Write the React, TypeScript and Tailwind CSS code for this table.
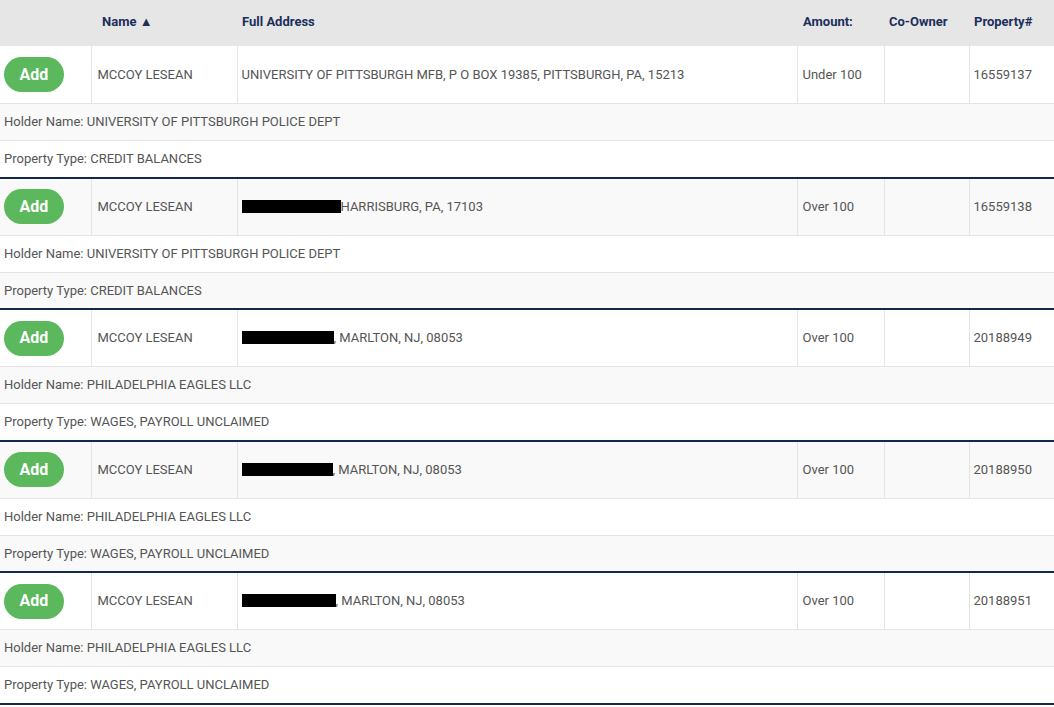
import React from "react";

interface Result {
  id: string;
  name: string;
  address: string;
  redactW?: number;
  amount: string;
  coOwner: string;
  holder: string;
  type: string;
}

const RESULTS: Result[] = [
  {
    id: "16559137",
    name: "MCCOY LESEAN",
    address: "UNIVERSITY OF PITTSBURGH MFB, P O BOX 19385, PITTSBURGH, PA, 15213",
    amount: "Under 100",
    coOwner: "",
    holder: "UNIVERSITY OF PITTSBURGH POLICE DEPT",
    type: "CREDIT BALANCES",
  },
  {
    id: "16559138",
    name: "MCCOY LESEAN",
    address: "HARRISBURG, PA, 17103",
    redactW: 99,
    amount: "Over 100",
    coOwner: "",
    holder: "UNIVERSITY OF PITTSBURGH POLICE DEPT",
    type: "CREDIT BALANCES",
  },
  {
    id: "20188949",
    name: "MCCOY LESEAN",
    address: ", MARLTON, NJ, 08053",
    redactW: 92,
    amount: "Over 100",
    coOwner: "",
    holder: "PHILADELPHIA EAGLES LLC",
    type: "WAGES, PAYROLL UNCLAIMED",
  },
  {
    id: "20188950",
    name: "MCCOY LESEAN",
    address: ", MARLTON, NJ, 08053",
    redactW: 91,
    amount: "Over 100",
    coOwner: "",
    holder: "PHILADELPHIA EAGLES LLC",
    type: "WAGES, PAYROLL UNCLAIMED",
  },
  {
    id: "20188951",
    name: "MCCOY LESEAN",
    address: ", MARLTON, NJ, 08053",
    redactW: 94,
    amount: "Over 100",
    coOwner: "",
    holder: "PHILADELPHIA EAGLES LLC",
    type: "WAGES, PAYROLL UNCLAIMED",
  },
];

// table rows are striped by position, so the stripe shifts from group to group
function stripe(i: number) {
  return i % 2 === 0 ? "bg-white" : "bg-[#f9f9f9]";
}

export default function App() {
  return (
    <div
      className="w-[1054px] h-[707px] overflow-hidden bg-white text-[13px] text-[#555]"
      style={{ fontFamily: "Roboto, 'Liberation Sans', sans-serif" }}
    >
      <table className="w-full table-fixed border-collapse">
        <colgroup>
          <col className="w-[91px]" />
          <col className="w-[146px]" />
          <col className="w-[560px]" />
          <col className="w-[87px]" />
          <col className="w-[85px]" />
          <col className="w-[85px]" />
        </colgroup>
        <thead>
          <tr className="h-[46px] bg-[#e6e6e6] text-[13px] font-bold text-[#1b2f5b]">
            <th className="text-left align-middle pb-[2px]"></th>
            <th className="text-left align-middle pb-[2px] pl-[11px]">Name ▲</th>
            <th className="text-left align-middle pb-[2px] pl-[5px]">Full Address</th>
            <th className="text-left align-middle pb-[2px] pl-[6px]">Amount:</th>
            <th className="text-left align-middle pb-[2px] pl-[5px]">Co-Owner</th>
            <th className="text-left align-middle pb-[2px] pl-[5px]">Property#</th>
          </tr>
        </thead>
        <tbody>
          {RESULTS.map((r, gi) => {
            const base = gi * 3;
            return (
              <React.Fragment key={r.id}>
                <tr className={`h-[57.5px] ${stripe(base)} border-b border-[#e4e4e4]`}>
                  <td className="pl-[4px] align-middle">
                    <button className="w-[60px] h-[35px] rounded-full bg-[#5cb85c] text-white text-[16px] font-bold leading-none">
                      Add
                    </button>
                  </td>
                  <td className="border-l border-[#e4e4e4] pl-[6px] align-middle">{r.name}</td>
                  <td className="border-l border-[#e4e4e4] pl-[4px] align-middle whitespace-nowrap">
                    {r.redactW && (
                      <span
                        className="inline-block h-[13px] bg-black align-[-2px]"
                        style={{ width: r.redactW }}
                      />
                    )}
                    {r.address}
                  </td>
                  <td className="border-l border-[#e4e4e4] pl-[5px] align-middle">{r.amount}</td>
                  <td className="border-l border-[#e4e4e4] pl-[5px] align-middle">{r.coOwner}</td>
                  <td className="border-l border-[#e4e4e4] pl-[4px] align-middle">{r.id}</td>
                </tr>
                <tr className={`h-[37px] ${stripe(base + 1)} border-b border-[#e4e4e4]`}>
                  <td colSpan={6} className="pl-[4px] align-middle">
                    Holder Name: {r.holder}
                  </td>
                </tr>
                <tr className={`h-[37px] ${stripe(base + 2)} border-b-2 border-[#14284b]`}>
                  <td colSpan={6} className="pl-[4px] align-middle">
                    Property Type: {r.type}
                  </td>
                </tr>
              </React.Fragment>
            );
          })}
        </tbody>
      </table>
    </div>
  );
}
